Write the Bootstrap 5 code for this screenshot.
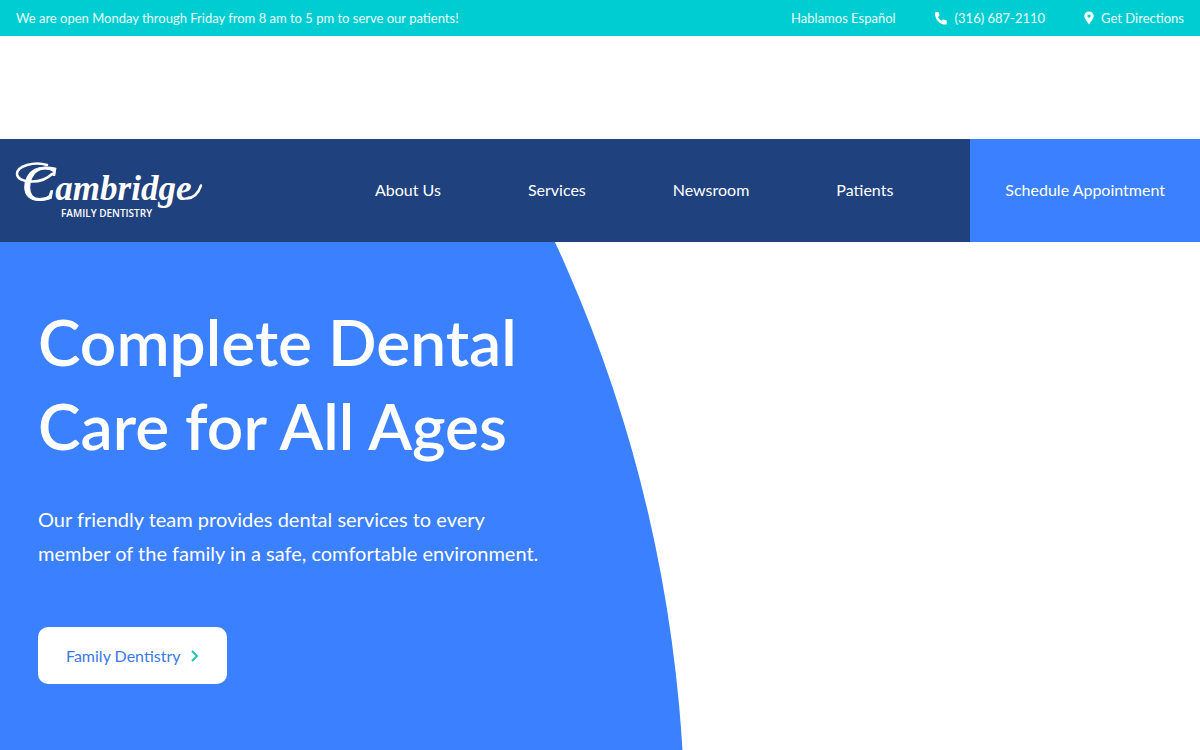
<!DOCTYPE html>
<html lang="en">
<head>
<meta charset="utf-8">
<meta name="viewport" content="width=device-width, initial-scale=1">
<title>Cambridge Family Dentistry</title>
<link href="https://cdn.jsdelivr.net/npm/bootstrap@5.3.0/dist/css/bootstrap.min.css" rel="stylesheet">
<style>
  :root {
    --teal: #00cdd1;
    --navy: #1f417e;
    --azure: #3b80ff;
  }
  body { font-family: Lato, "Open Sans", sans-serif; background: #fff; }
  .top-bar { background: var(--teal); color: #e8fcfc; font-size: 13px; line-height: 20px; padding: 8px 16px; }
  .top-bar a { color: #e8fcfc; text-decoration: none; }
  .site-nav a { color: #fff; text-decoration: none; }
  .top-links { gap: 39px; }
  .phone-link { gap: 8px; }
  .place-link { gap: 7px; }
  .site-header { padding-top: 103px; }
  .site-nav { background: var(--navy); min-height: 103px; font-size: 16px; line-height: 24px; }
  .brand-logo { margin-left: 14px; }
  .menu-links { gap: 87px; margin-right: 77px; }
  .menu-links, .site-nav .cta-link { padding-bottom: 2px; }
  .site-nav .cta-link { background: var(--azure); padding-left: 35px; padding-right: 35px; }
  .hero { padding: 58px 38px 64px; overflow: hidden; }
  .hero-shape {
    inset: 0;
    background: var(--azure);
    clip-path: ellipse(1234px 1327px at -549px 593px);
  }
  .hero h1 { font-size: 64px; font-weight: 600; line-height: 84px; margin-bottom: 34px; }
  .hero p { font-size: 20px; line-height: 34px; margin-bottom: 57px; }
  .hero-btn {
    --bs-btn-bg: #fff;
    --bs-btn-color: #3a79e6;
    --bs-btn-hover-bg: #eef4ff;
    --bs-btn-hover-color: #3a79e6;
    --bs-btn-border-radius: 10px;
    --bs-btn-padding-x: 28px;
    --bs-btn-padding-y: 16px;
    --bs-btn-border-width: 0;
    --bs-btn-line-height: 25px;
    gap: 10px;
  }
</style>
</head>
<body class="d-flex flex-column min-vh-100">
  <div class="top-bar d-flex flex-wrap justify-content-between align-items-center">
    <span>We are open Monday through Friday from 8 am to 5 pm to serve our patients!</span>
    <div class="top-links d-flex flex-wrap">
      <a href="#">Hablamos Español</a>
      <a href="#" class="phone-link d-flex align-items-center">
        <svg width="12" height="13" viewBox="0 0 12 13" fill="#fff" aria-hidden="true"><path d="M.6.2 3 .1q.6 0 .8.6l.7 2.4q.1.5-.3.9L2.9 5q1.1 2.4 3.4 3.8l1.4-1.2q.4-.3.9-.2l2.5.8q.6.2.6.8v2.7q0 .8-.8.9C4.900 12.900-.1 7.500 0 1.100Q0 .4.600.2Z"/></svg>
        (316) 687-2110
      </a>
      <a href="#" class="place-link d-flex align-items-center">
        <svg width="10" height="14" viewBox="0 0 10 14" fill="#fff" aria-hidden="true"><path fill-rule="evenodd" d="M5 .4A4.700 4.700 0 0 0 .3 5.100C.3 7.600 3.300 10.900 5 13.500c1.700-2.600 4.700-5.900 4.700-8.400A4.700 4.700 0 0 0 5 .4Zm0 3a1.700 1.700 0 1 1 0 3.400 1.700 1.700 0 0 1 0-3.400Z"/></svg>
        Get Directions
      </a>
    </div>
  </div>

  <header class="site-header">
    <nav class="site-nav d-flex align-items-stretch">
      <a href="#" class="brand-logo d-flex align-items-center" aria-label="Cambridge Family Dentistry">
        <svg width="192" height="80" viewBox="0 -8 192 80" fill="#fff" aria-hidden="true">
          <path d="M33 6C20 2 3 7 3 15c0 9 24 11 35 0" fill="none" stroke="#fff" stroke-width="2.500" stroke-linecap="round"/>
          <text x="8" y="41" font-family="Liberation Serif, serif" font-style="italic" font-weight="700" font-size="35"><tspan font-size="50" font-weight="400" stroke="#fff">C</tspan>ambridge</text>
          <path d="M173 39.500q10-1 14-13" fill="none" stroke="#fff" stroke-width="2.500" stroke-linecap="round"/>
          <text x="47" y="58" font-family="Open Sans, sans-serif" font-weight="600" font-size="10">FAMILY DENTISTRY</text>
        </svg>
      </a>
      <div class="menu-links d-flex align-items-center ms-auto">
        <a href="#">About Us</a>
        <a href="#">Services</a>
        <a href="#">Newsroom</a>
        <a href="#">Patients</a>
      </div>
      <a href="#" class="cta-link d-flex align-items-center">Schedule Appointment</a>
    </nav>
  </header>

  <main class="hero position-relative flex-grow-1 text-white">
    <div class="hero-shape position-absolute"></div>
    <div class="position-relative">
      <h1>Complete Dental<br>Care for All Ages</h1>
      <p>Our friendly team provides dental services to every<br>member of the family in a safe, comfortable environment.</p>
      <button type="button" class="btn hero-btn d-inline-flex align-items-center">
        Family Dentistry
        <svg width="8" height="12" viewBox="0 0 8 12" fill="none" stroke="#1fc8b4" stroke-width="2" aria-hidden="true"><path d="m1 1 5 5-5 5"/></svg>
      </button>
    </div>
  </main>
  <script src="https://cdn.jsdelivr.net/npm/bootstrap@5.3.0/dist/js/bootstrap.bundle.min.js"></script>
</body>
</html>
